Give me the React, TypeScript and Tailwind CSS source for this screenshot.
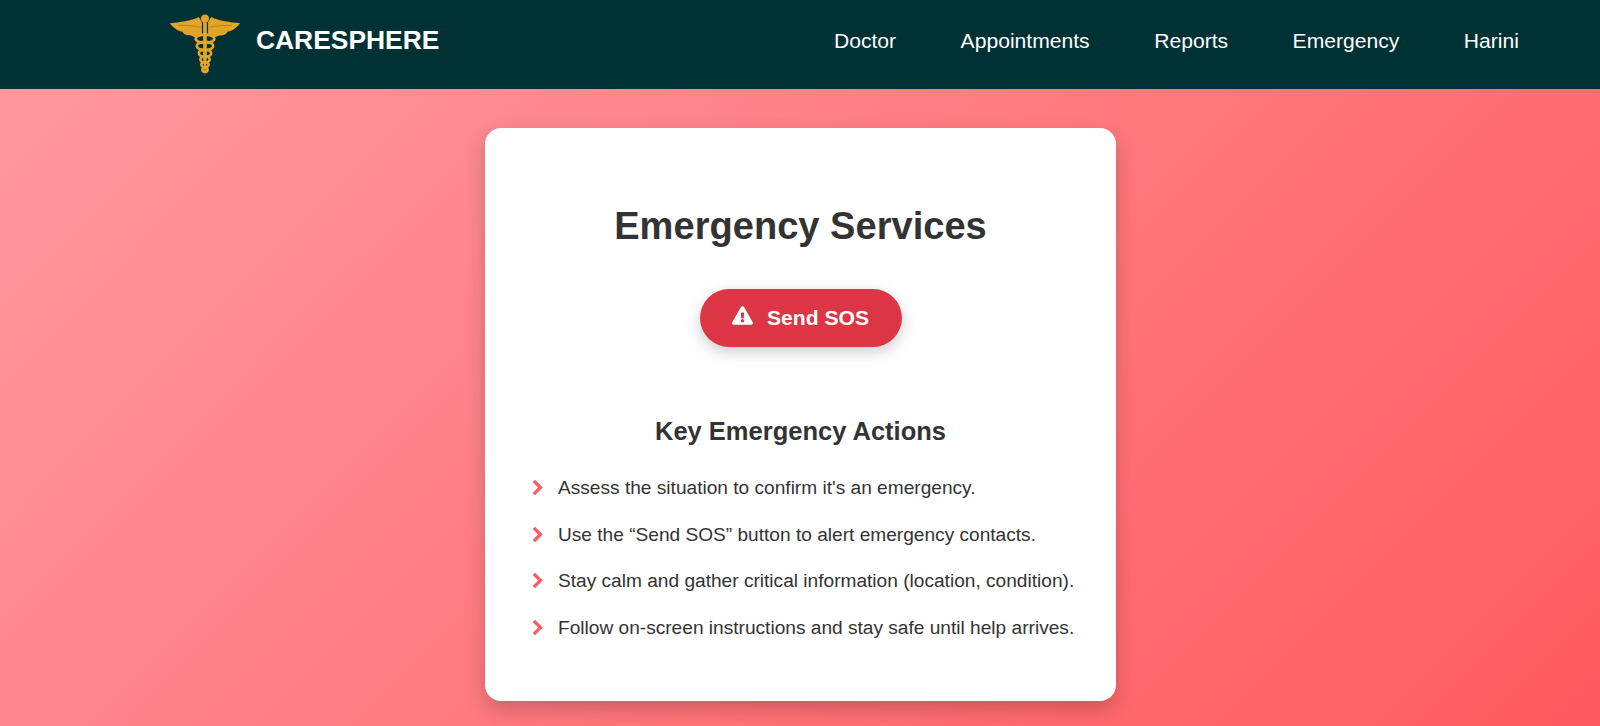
import { FaExclamationTriangle } from "react-icons/fa";

const links = ["Doctor", "Appointments", "Reports", "Emergency", "Harini"];

const actions = [
  "Assess the situation to confirm it's an emergency.",
  "Use the “Send SOS” button to alert emergency contacts.",
  "Stay calm and gather critical information (location, condition).",
  "Follow on-screen instructions and stay safe until help arrives.",
];

const coils = [
  { cy: 24, rx: 9, ry: 4 },
  { cy: 31, rx: 8, ry: 4 },
  { cy: 38, rx: 6, ry: 3.5 },
  { cy: 44, rx: 4.5, ry: 3 },
  { cy: 49, rx: 3.5, ry: 2.5 },
  { cy: 54, rx: 2.5, ry: 2 },
];

function Logo() {
  return (
    <svg width="72" height="62" viewBox="0 0 68 60" className="shrink-0">
      {/* wings */}
      <path d="M31 8 L28 3 C20 7 10 8 0 9 C5 15 9 17 12 17 C14 21 18 21 21 21 C24 23 28 23 31 20 Z" fill="#e3a527" />
      <path d="M37 8 L40 3 C48 7 58 8 68 9 C63 15 59 17 56 17 C54 21 50 21 47 21 C44 23 40 23 37 20 Z" fill="#e3a527" />
      <path d="M8 11 C15 11 22 11 30 13 M60 11 C53 11 46 11 38 13" stroke="#a8761a" strokeWidth="0.7" fill="none" />
      {/* staff */}
      <circle cx="34" cy="4.5" r="4" fill="#e3a527" />
      <path d="M32.2 8 L35.8 8 L35.8 42 L34 60 L32.2 42 Z" fill="#e3a527" />
      {/* snakes */}
      {coils.map((c) => (
        <ellipse key={c.cy} cx="34" cy={c.cy} rx={c.rx} ry={c.ry} fill="none" stroke="#e3a527" strokeWidth="2.6" />
      ))}
    </svg>
  );
}

export default function App() {
  return (
    <div className="flex min-h-[726px] flex-col bg-[linear-gradient(135deg,#ff9aa2,#ff5a5f)] font-['Liberation_Sans',Arial,sans-serif] text-[#333]">
      {/* NAVBAR */}
      <nav className="flex h-[89px] items-center justify-between bg-[#003135] pl-[169px] pr-[81px] text-white">
        <div className="flex items-center gap-[15px]">
          <Logo />
          <span className="mb-[8px] text-[26.4px] font-bold">CARESPHERE</span>
        </div>
        <ul className="mb-[8px] flex gap-[64.5px] text-[21.12px]">
          {links.map((link) => (
            <li key={link}>{link}</li>
          ))}
        </ul>
      </nav>

      {/* CARD */}
      <main className="flex flex-1 justify-center pl-px pt-[39px]">
        <section className="h-[573px] w-[631px] rounded-[16px] bg-white pl-[47px] pr-[47px] pt-[76px] shadow-[0_8px_20px_rgba(0,0,0,0.2)]">
          <h1 className="text-center text-[38.1px] font-bold leading-[44px]">Emergency Services</h1>

          <div className="mt-[41px] flex justify-center">
            <button className="flex h-[58px] w-[202px] items-center justify-center gap-[14px] rounded-full bg-[#dc3545] text-[21.1px] font-bold text-white shadow-[0_5px_15px_rgba(0,0,0,0.2)]">
              <FaExclamationTriangle className="mb-[6px] h-[19px] w-[21px]" />
              Send SOS
            </button>
          </div>

          <h2 className="mt-[70px] text-center text-[25.5px] font-bold leading-[28px]">Key Emergency Actions</h2>

          <ul className="mt-[28px] flex flex-col gap-[17.6px] text-[19.12px] leading-[29px]">
            {actions.map((text) => (
              <li key={text} className="flex items-center">
                <svg width="11" height="17" viewBox="0 0 11 17" className="shrink-0">
                  <polyline points="1.8,1.8 8.5,8.5 1.8,15.2" fill="none" stroke="#ff5a5f" strokeWidth="3.2" />
                </svg>
                <span className="ml-[15px] whitespace-nowrap">{text}</span>
              </li>
            ))}
          </ul>
        </section>
      </main>
    </div>
  );
}
